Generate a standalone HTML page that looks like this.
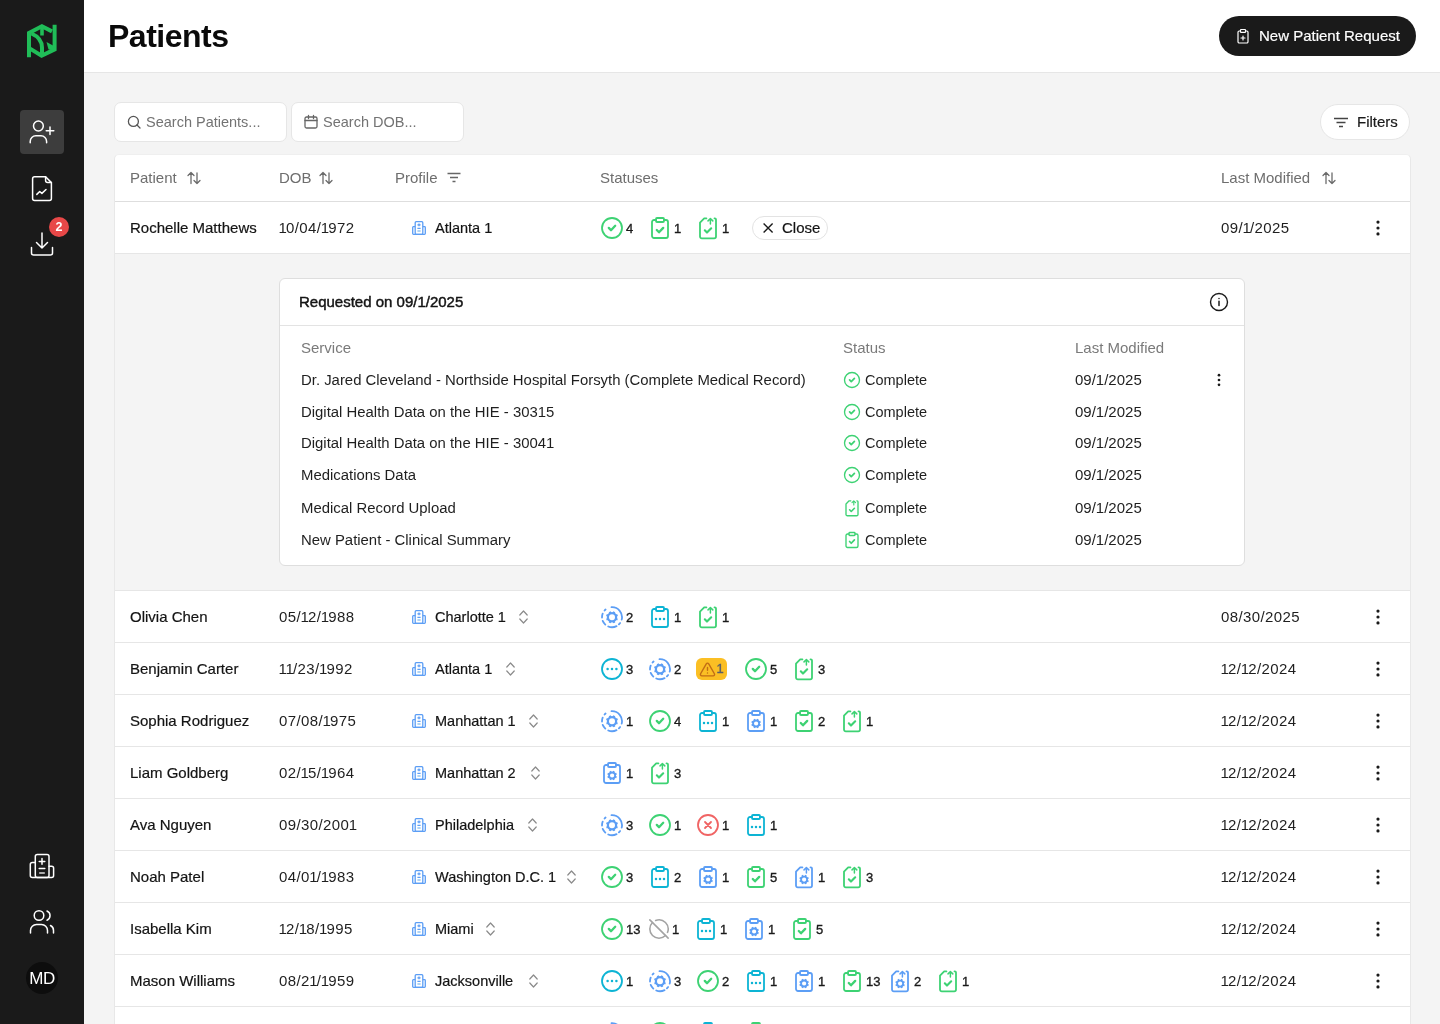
<!DOCTYPE html>
<html><head><meta charset="utf-8">
<style>
*{box-sizing:border-box;margin:0;padding:0}
html,body{will-change:transform;width:1440px;height:1024px;overflow:hidden;background:#f4f4f4;font-family:"Liberation Sans",sans-serif;color:#1a1a1a}
.abs{position:absolute}
svg.abs{overflow:visible}
#side{position:absolute;left:0;top:0;width:84px;height:1024px;background:#1a1a1a}
#hdr{position:absolute;left:84px;top:0;width:1356px;height:73px;background:#fff;border-bottom:1px solid #e6e6e6}
#title{position:absolute;left:24px;top:16px;font-size:32px;font-weight:bold;letter-spacing:-0.5px;color:#0a0a0a;line-height:40px}
#npr{position:absolute;left:1135px;top:16px;width:197px;height:40px;border-radius:20px;background:#1a1a1a;color:#fff;font-size:15px;line-height:40px;-webkit-text-stroke:0.2px #fff}
.inp{position:absolute;top:102px;height:40px;background:#fff;border:1px solid #e6e6e6;border-radius:7px;color:#737373;font-size:14.5px;line-height:38px}
#filters{position:absolute;left:1320px;top:104px;width:90px;height:36px;border-radius:18px;background:#fff;border:1px solid #e6e6e6;font-size:15px;line-height:34px;-webkit-text-stroke:0.2px #1a1a1a}
#tbl{position:absolute;left:114px;top:154px;width:1297px;height:900px;background:#fff;border:1px solid #e8e8e8;border-top-color:#efefef;border-radius:5px}
.cell{line-height:51px;font-size:15px;white-space:nowrap;color:#1f1f1f}
.med{color:#141414;-webkit-text-stroke:0.2px #141414}
.date{letter-spacing:0.4px}
.n1{letter-spacing:-0.9px;margin-left:-0.5px}
.th{position:absolute;top:154px;line-height:47px;font-size:15px;color:#6e6e6e;white-space:nowrap}
.hline{position:absolute;left:115px;width:1295px;height:1px;background:#e6e6e6}
.num{font-size:13px;font-weight:normal;-webkit-text-stroke:0.35px currentColor;line-height:51px;color:#1a1a1a}
#card{position:absolute;left:279px;top:278px;width:966px;height:288px;background:#fff;border:1px solid #dedede;border-radius:6px}
.sr{position:absolute;font-size:15px;line-height:20px;white-space:nowrap;color:#1f1f1f}
.sh{position:absolute;font-size:15px;line-height:20px;white-space:nowrap;color:#7a7a7a}
</style></head><body>
<svg width="0" height="0" style="position:absolute"><defs><symbol id="cc" viewBox="0 0 24 24"><g fill="none" stroke="#3dd273" stroke-width="1.8" stroke-linecap="round" stroke-linejoin="round"><circle cx="12" cy="12" r="10"/><path d="m8.8 11.9 2.2 2.3 4.2-4.4" stroke-width="2.3"/></g></symbol><symbol id="clc" viewBox="0 0 24 24"><g fill="none" stroke="#3dd273" stroke-width="1.8" stroke-linecap="round" stroke-linejoin="round"><path d="M16 4h2a2 2 0 0 1 2 2v14a2 2 0 0 1-2 2H6a2 2 0 0 1-2-2V6a2 2 0 0 1 2-2h2"/><rect x="8" y="2" width="8" height="4" rx="1"/><path d="m8.8 14 2.2 2.3 4.2-4.4" stroke-width="2.3"/></g></symbol><symbol id="cld" viewBox="0 0 24 24"><g fill="none" stroke="#0db4d4" stroke-width="1.8" stroke-linecap="round" stroke-linejoin="round"><path d="M16 4h2a2 2 0 0 1 2 2v14a2 2 0 0 1-2 2H6a2 2 0 0 1-2-2V6a2 2 0 0 1 2-2h2"/><rect x="8" y="2" width="8" height="4" rx="1"/><path d="M8 14h.01M12 14h.01M16 14h.01" stroke-width="2.5"/></g></symbol><symbol id="clg" viewBox="0 0 24 24"><g fill="none" stroke="#5c9ef5" stroke-width="1.8" stroke-linecap="round" stroke-linejoin="round"><path d="M16 4h2a2 2 0 0 1 2 2v14a2 2 0 0 1-2 2H6a2 2 0 0 1-2-2V6a2 2 0 0 1 2-2h2"/><rect x="8" y="2" width="8" height="4" rx="1"/></g><circle cx="12.1" cy="14.5" r="3.0" stroke="#5c9ef5" stroke-width="1.8" fill="none"/><line x1="13.25" y1="11.73" x2="13.94" y2="10.07" stroke="#5c9ef5" stroke-width="1.71"/><line x1="14.87" y1="13.35" x2="16.53" y2="12.66" stroke="#5c9ef5" stroke-width="1.71"/><line x1="14.87" y1="15.65" x2="16.53" y2="16.34" stroke="#5c9ef5" stroke-width="1.71"/><line x1="13.25" y1="17.27" x2="13.94" y2="18.93" stroke="#5c9ef5" stroke-width="1.71"/><line x1="10.95" y1="17.27" x2="10.26" y2="18.93" stroke="#5c9ef5" stroke-width="1.71"/><line x1="9.33" y1="15.65" x2="7.67" y2="16.34" stroke="#5c9ef5" stroke-width="1.71"/><line x1="9.33" y1="13.35" x2="7.67" y2="12.66" stroke="#5c9ef5" stroke-width="1.71"/><line x1="10.95" y1="11.73" x2="10.26" y2="10.07" stroke="#5c9ef5" stroke-width="1.71"/></symbol><symbol id="cuc" viewBox="0 0 24 24"><g fill="none" stroke="#3dd273" stroke-width="1.8" stroke-linecap="round" stroke-linejoin="round"><path d="M10.4 2.4H8.2L4 6.6V20.5a1.8 1.8 0 0 0 1.8 1.8h12.4a1.8 1.8 0 0 0 1.8-1.8V3.6a1.2 1.2 0 0 0-1.2-1.2h-0.3"/><path d="M14.4 8V2.5M12 4.9l2.4-2.4 2.4 2.4" stroke-width="1.5"/><path d="m8.8 14.3 2.2 2.3 4.2-4.3" stroke-width="2.1"/></g></symbol><symbol id="cug" viewBox="0 0 24 24"><g fill="none" stroke="#5c9ef5" stroke-width="1.8" stroke-linecap="round" stroke-linejoin="round"><path d="M10.4 2.4H8.2L4 6.6V20.5a1.8 1.8 0 0 0 1.8 1.8h12.4a1.8 1.8 0 0 0 1.8-1.8V3.6a1.2 1.2 0 0 0-1.2-1.2h-0.3"/><path d="M14.4 8V2.5M12 4.9l2.4-2.4 2.4 2.4" stroke-width="1.5"/></g><circle cx="12.1" cy="14.6" r="3.0" stroke="#5c9ef5" stroke-width="1.8" fill="none"/><line x1="13.25" y1="11.83" x2="13.94" y2="10.17" stroke="#5c9ef5" stroke-width="1.71"/><line x1="14.87" y1="13.45" x2="16.53" y2="12.76" stroke="#5c9ef5" stroke-width="1.71"/><line x1="14.87" y1="15.75" x2="16.53" y2="16.44" stroke="#5c9ef5" stroke-width="1.71"/><line x1="13.25" y1="17.37" x2="13.94" y2="19.03" stroke="#5c9ef5" stroke-width="1.71"/><line x1="10.95" y1="17.37" x2="10.26" y2="19.03" stroke="#5c9ef5" stroke-width="1.71"/><line x1="9.33" y1="15.75" x2="7.67" y2="16.44" stroke="#5c9ef5" stroke-width="1.71"/><line x1="9.33" y1="13.45" x2="7.67" y2="12.76" stroke="#5c9ef5" stroke-width="1.71"/><line x1="10.95" y1="11.83" x2="10.26" y2="10.17" stroke="#5c9ef5" stroke-width="1.71"/></symbol><symbol id="gd" viewBox="0 0 24 24"><g fill="none" stroke="#5c9ef5" stroke-width="1.8" stroke-linecap="round"><path d="M11.48 2.21A10 10 0 0 1 21.70 14.62 M20.09 18.08A10 10 0 0 1 18.95 19.39 M16.54 21.11A10 10 0 0 1 8.25 21.47 M5.31 19.63A10 10 0 0 1 2.73 15.95 M2.01 12.55A10 10 0 0 1 2.66 8.62 M4.57 5.51A10 10 0 0 1 5.57 4.54"/></g><circle cx="12" cy="12.3" r="4.1" stroke="#5c9ef5" stroke-width="2.2" fill="none"/><line x1="13.57" y1="8.51" x2="14.30" y2="6.76" stroke="#5c9ef5" stroke-width="2.09"/><line x1="15.79" y1="10.73" x2="17.54" y2="10.00" stroke="#5c9ef5" stroke-width="2.09"/><line x1="15.79" y1="13.87" x2="17.54" y2="14.60" stroke="#5c9ef5" stroke-width="2.09"/><line x1="13.57" y1="16.09" x2="14.30" y2="17.84" stroke="#5c9ef5" stroke-width="2.09"/><line x1="10.43" y1="16.09" x2="9.70" y2="17.84" stroke="#5c9ef5" stroke-width="2.09"/><line x1="8.21" y1="13.87" x2="6.46" y2="14.60" stroke="#5c9ef5" stroke-width="2.09"/><line x1="8.21" y1="10.73" x2="6.46" y2="10.00" stroke="#5c9ef5" stroke-width="2.09"/><line x1="10.43" y1="8.51" x2="9.70" y2="6.76" stroke="#5c9ef5" stroke-width="2.09"/></symbol><symbol id="cd" viewBox="0 0 24 24"><g fill="none" stroke="#0db4d4" stroke-width="1.8" stroke-linecap="round"><circle cx="12" cy="12" r="10"/><path d="M7.6 12h.01M12 12h.01M16.4 12h.01" stroke-width="2.5"/></g></symbol><symbol id="cx" viewBox="0 0 24 24"><g fill="none" stroke="#f06464" stroke-width="1.8" stroke-linecap="round"><circle cx="12" cy="12" r="10"/><path d="m15 9-6 6M9 9l6 6"/></g></symbol><symbol id="co" viewBox="0 0 24 24"><g fill="none" stroke="#a3a3a3" stroke-width="1.7" stroke-linecap="round"><path d="m2 2 20 20"/><path d="M8.35 2.69A10 10 0 0 1 21.3 15.65"/><path d="M19.08 19.08A10 10 0 1 1 4.92 4.92"/></g></symbol></defs></svg>
<div id="side">
  <!-- logo -->
  <svg class="abs" style="left:22px;top:20px" width="40" height="42" viewBox="0 0 40 42">
    <g fill="none" stroke="#20bd58" stroke-width="4" stroke-linejoin="miter">
      <path d="M7 37.3V13L19.9 6.2 30 11.4"/>
      <path d="M32.6 4.8V29.4L19.6 35.8 8 28.6"/>
      <path d="M9.5 13.5Q19.8 18 20 27.5V35"/>
      <path d="M20 6.5v9" stroke-width="3.6"/>
    </g>
    <polygon points="24.5,22 31,25.5 31,30 26.5,29.5" fill="#20bd58"/>
  </svg>
  <div class="abs" style="left:20px;top:110px;width:44px;height:44px;border-radius:4px;background:#3d3d3d"></div>
  <svg class="abs" style="left:20px;top:110px" width="44" height="44" viewBox="0 0 44 44"><g fill="none" stroke="#fff" stroke-width="1.5" stroke-linecap="round"><circle cx="18.4" cy="16" r="4.9"/><path d="M10.2 32.8v-1.4a5.6 5.6 0 0 1 5.6-5.6h5.2a5.6 5.6 0 0 1 5.6 5.6v1.4"/><path d="M30 17v7.6M26.2 20.8h7.6"/></g></svg>
  <svg class="abs" style="left:20px;top:166px" width="44" height="44" viewBox="0 0 44 44"><g fill="none" stroke="#fff" stroke-width="1.5" stroke-linejoin="round" stroke-linecap="round"><path d="M25.6 10.8H14.6a2 2 0 0 0-2 2v19.6a2 2 0 0 0 2 2h14.8a2 2 0 0 0 2-2V16.6z"/><path d="M25.6 10.8v3.8a2 2 0 0 0 2 2h3.8"/><path d="M16.8 28.4l2.9-2.9 2.2 1.9 4.1-3.9"/></g></svg>
  <svg class="abs" style="left:20px;top:222px" width="44" height="44" viewBox="0 0 44 44"><g fill="none" stroke="#fff" stroke-width="1.5" stroke-linecap="round" stroke-linejoin="round"><path d="M22 11v15M16.5 20.5 22 26l5.5-5.5"/><path d="M11.5 25.5v5.5a2 2 0 0 0 2 2h17a2 2 0 0 0 2-2v-5.5"/></g></svg>
  <div class="abs" style="left:49px;top:217px;width:20px;height:20px;border-radius:10px;background:#e84848;color:#fff;font-size:12.5px;font-weight:bold;line-height:20px;text-align:center">2</div>
  <svg class="abs" style="left:20px;top:844px" width="44" height="44" viewBox="0 0 44 44"><g fill="none" stroke="#fff" stroke-width="1.5" stroke-linecap="round" stroke-linejoin="round"><rect x="15.3" y="10.5" width="13.7" height="23.1" rx="2"/><path d="M15.3 18.4h-3a2 2 0 0 0-2 2v11.2a2 2 0 0 0 2 2h19.3a2 2 0 0 0 2-2V24.3a2 2 0 0 0-2-2H29"/><path d="M22 14.6v5.6M19.2 17.4h5.6M19.2 24.4h5.6"/><path d="M19.2 29h5.6" stroke="#b5b5b5" stroke-width="1.9" stroke-linecap="butt"/></g></svg>
  <svg class="abs" style="left:20px;top:900px" width="44" height="44" viewBox="0 0 44 44"><g fill="none" stroke="#fff" stroke-width="1.5" stroke-linecap="round"><circle cx="19" cy="15.5" r="4.8"/><path d="M10.5 33v-2.5a6 6 0 0 1 6-6h5a6 6 0 0 1 6 6V33"/><path d="M27 11a5 5 0 0 1 0 9.2M30.5 25.5a5.5 5.5 0 0 1 3 5V33"/></g></svg>
  <div class="abs" style="left:26px;top:962px;width:32px;height:32px;border-radius:16px;background:#0d0d0d;color:#fff;font-size:17px;line-height:34px;text-align:center;letter-spacing:-0.5px">MD</div>
</div>
<div id="hdr">
  <div id="title">Patients</div>
  <div id="npr"><span class="abs" style="left:40px;top:0">New Patient Request</span>
    <svg class="abs" style="left:16px;top:12px" width="16" height="16" viewBox="0 0 16 16"><g fill="none" stroke="#fff" stroke-width="1.2" stroke-linecap="round" stroke-linejoin="round"><path d="M10.5 3h1.3a1.2 1.2 0 0 1 1.2 1.2v9.6a1.2 1.2 0 0 1-1.2 1.2H4.2A1.2 1.2 0 0 1 3 13.8V4.2A1.2 1.2 0 0 1 4.2 3h1.3"/><rect x="5.5" y="1.5" width="5" height="2.8" rx="0.6"/><path d="M8 8v4M6 10h4"/></g></svg>
  </div>
</div>
<div class="inp" style="left:114px;width:173px"><span class="abs" style="left:31px;top:0">Search Patients...</span>
  <svg class="abs" style="left:11px;top:11px" width="16" height="16" viewBox="0 0 16 16"><g fill="none" stroke="#555" stroke-width="1.3" stroke-linecap="round"><circle cx="7.4" cy="7.4" r="5"/><path d="m11 11 3 3"/></g></svg>
</div>
<div class="inp" style="left:291px;width:173px"><span class="abs" style="left:31px;top:0">Search DOB...</span>
  <svg class="abs" style="left:11px;top:11px" width="16" height="16" viewBox="0 0 16 16"><g fill="none" stroke="#666" stroke-width="1.3" stroke-linecap="round"><rect x="2" y="3" width="12" height="11" rx="1.5"/><path d="M2 6.5h12M5.5 1.5v3M10.5 1.5v3"/></g></svg>
</div>
<div id="filters"><span class="abs" style="left:36px;top:0">Filters</span>
  <svg class="abs" style="left:12px;top:10px" width="16" height="16" viewBox="0 0 16 16"><g fill="none" stroke="#444" stroke-width="1.5" stroke-linecap="butt"><path d="M1 3.5h14M3.5 7.5h9M6 11.5h4"/></g></svg>
</div>
<div id="tbl"></div>
<div class="th" style="left:130px">Patient</div>
<svg class="abs" style="left:186px;top:170px" width="16" height="16" viewBox="0 0 16 16"><g fill="none" stroke="#6b6b6b" stroke-width="1.3" stroke-linecap="round" stroke-linejoin="round"><path d="M5 13.5V2.5M2 5.5l3-3 3 3M11 3v10.5M8 10.5l3 3 3-3"/></g></svg>
<div class="th" style="left:279px">DOB</div>
<svg class="abs" style="left:318px;top:170px" width="16" height="16" viewBox="0 0 16 16"><g fill="none" stroke="#6b6b6b" stroke-width="1.3" stroke-linecap="round" stroke-linejoin="round"><path d="M5 13.5V2.5M2 5.5l3-3 3 3M11 3v10.5M8 10.5l3 3 3-3"/></g></svg>
<div class="th" style="left:395px">Profile</div>
<svg class="abs" style="left:446px;top:170px" width="16" height="16" viewBox="0 0 16 16"><g fill="none" stroke="#666" stroke-width="1.3"><path d="M1.5 3.5h13M4 7.5h8M6.5 11.5h3"/></g></svg>
<div class="th" style="left:600px">Statuses</div>
<div class="th" style="left:1221px">Last Modified</div>
<svg class="abs" style="left:1321px;top:170px" width="16" height="16" viewBox="0 0 16 16"><g fill="none" stroke="#6b6b6b" stroke-width="1.3" stroke-linecap="round" stroke-linejoin="round"><path d="M5 13.5V2.5M2 5.5l3-3 3 3M11 3v10.5M8 10.5l3 3 3-3"/></g></svg>
<div class="hline" style="top:201px;background:#dedede"></div>
<div class="abs cell med" style="left:130px;top:202px">Rochelle Matthews</div>
<div class="abs cell date" style="left:279px;top:202px"><span class="n1">1</span>0/04/<span class="n1">1</span>972</div>
<svg class="abs" style="left:412px;top:221px" width="14" height="14" viewBox="0 0 14 14"><g fill="none" stroke="#5c9ef5" stroke-width="1.3" stroke-linejoin="round"><rect x="3.2" y="0.7" width="7.6" height="12.6" rx="1"/><path d="M3.2 5.7H1.4a0.8 0.8 0 0 0-0.7 0.8v6a0.8 0.8 0 0 0 0.8 0.8H12.5a0.8 0.8 0 0 0 0.8-0.8v-6a0.8 0.8 0 0 0-0.8-0.8H10.8"/><path d="M7 2.4v2.8M5.4 3.8h3.2M5.4 7.4h3.2"/><path d="M5.4 10h3.2" stroke="#93c5f0" stroke-width="1.5"/></g></svg><div class="abs cell med" style="left:435px;top:203px;font-size:14.5px">Atlanta 1</div>
<svg class="abs" style="left:600px;top:216.0px" width="24" height="24" viewBox="0 0 24 24"><use href="#cc"/></svg><div class="abs num" style="left:626px;top:203px">4</div><svg class="abs" style="left:648px;top:216.0px" width="24" height="24" viewBox="0 0 24 24"><use href="#clc"/></svg><div class="abs num" style="left:674px;top:203px">1</div><svg class="abs" style="left:696px;top:216.0px" width="24" height="24" viewBox="0 0 24 24"><use href="#cuc"/></svg><div class="abs num" style="left:722px;top:203px">1</div>
<div class="abs" style="left:752px;top:216px;width:76px;height:24px;border:1px solid #e3e3e3;border-radius:12px;background:#fff"></div>
<svg class="abs" style="left:761px;top:221px" width="14" height="14" viewBox="0 0 14 14"><path d="M2.6 2.6l9 9M11.6 2.6l-9 9" stroke="#1a1a1a" stroke-width="1.4" stroke-linecap="butt"/></svg>
<div class="abs cell med" style="left:782px;top:202px">Close</div>
<div class="abs cell date" style="left:1221px;top:202px">09/<span class="n1">1</span>/2025</div>
<svg class="abs" style="left:1366px;top:216px" width="24" height="24" viewBox="0 0 24 24"><g fill="#1a1a1a"><circle cx="12" cy="6.1" r="1.6"/><circle cx="12" cy="12" r="1.6"/><circle cx="12" cy="17.9" r="1.6"/></g></svg>
<div class="hline" style="top:253px"></div>
<div class="abs" style="left:115px;top:254px;width:1295px;height:336px;background:#f4f4f4"></div>
<div class="hline" style="top:590px"></div>
<div class="abs cell med" style="left:130px;top:591px">Olivia Chen</div>
<div class="abs cell date" style="left:279px;top:591px">05/<span class="n1">1</span>2/<span class="n1">1</span>988</div>
<svg class="abs" style="left:412px;top:610px" width="14" height="14" viewBox="0 0 14 14"><g fill="none" stroke="#5c9ef5" stroke-width="1.3" stroke-linejoin="round"><rect x="3.2" y="0.7" width="7.6" height="12.6" rx="1"/><path d="M3.2 5.7H1.4a0.8 0.8 0 0 0-0.7 0.8v6a0.8 0.8 0 0 0 0.8 0.8H12.5a0.8 0.8 0 0 0 0.8-0.8v-6a0.8 0.8 0 0 0-0.8-0.8H10.8"/><path d="M7 2.4v2.8M5.4 3.8h3.2M5.4 7.4h3.2"/><path d="M5.4 10h3.2" stroke="#93c5f0" stroke-width="1.5"/></g></svg><div class="abs cell med" style="left:435px;top:592px;font-size:14.5px">Charlotte 1</div><svg class="abs" style="left:519.0px;top:610px" width="9" height="14" viewBox="0 0 9 14"><g fill="none" stroke="#8a8a8a" stroke-width="1.2" stroke-linecap="round" stroke-linejoin="round"><path d="M0.8 5 4.5 1 8.2 5M0.8 9 4.5 13 8.2 9"/></g></svg>
<div class="abs cell date" style="left:1221px;top:591px">08/30/2025</div>
<svg class="abs" style="left:1366px;top:605px" width="24" height="24" viewBox="0 0 24 24"><g fill="#1a1a1a"><circle cx="12" cy="6.1" r="1.6"/><circle cx="12" cy="12" r="1.6"/><circle cx="12" cy="17.9" r="1.6"/></g></svg>
<div class="hline" style="top:642px"></div>
<svg class="abs" style="left:600px;top:605.0px" width="24" height="24" viewBox="0 0 24 24"><use href="#gd"/></svg><div class="abs num" style="left:626px;top:592px">2</div><svg class="abs" style="left:648px;top:605.0px" width="24" height="24" viewBox="0 0 24 24"><use href="#cld"/></svg><div class="abs num" style="left:674px;top:592px">1</div><svg class="abs" style="left:696px;top:605.0px" width="24" height="24" viewBox="0 0 24 24"><use href="#cuc"/></svg><div class="abs num" style="left:722px;top:592px">1</div>
<div class="abs cell med" style="left:130px;top:643px">Benjamin Carter</div>
<div class="abs cell date" style="left:279px;top:643px"><span class="n1">1</span><span class="n1">1</span>/23/<span class="n1">1</span>992</div>
<svg class="abs" style="left:412px;top:662px" width="14" height="14" viewBox="0 0 14 14"><g fill="none" stroke="#5c9ef5" stroke-width="1.3" stroke-linejoin="round"><rect x="3.2" y="0.7" width="7.6" height="12.6" rx="1"/><path d="M3.2 5.7H1.4a0.8 0.8 0 0 0-0.7 0.8v6a0.8 0.8 0 0 0 0.8 0.8H12.5a0.8 0.8 0 0 0 0.8-0.8v-6a0.8 0.8 0 0 0-0.8-0.8H10.8"/><path d="M7 2.4v2.8M5.4 3.8h3.2M5.4 7.4h3.2"/><path d="M5.4 10h3.2" stroke="#93c5f0" stroke-width="1.5"/></g></svg><div class="abs cell med" style="left:435px;top:644px;font-size:14.5px">Atlanta 1</div><svg class="abs" style="left:505.5px;top:662px" width="9" height="14" viewBox="0 0 9 14"><g fill="none" stroke="#8a8a8a" stroke-width="1.2" stroke-linecap="round" stroke-linejoin="round"><path d="M0.8 5 4.5 1 8.2 5M0.8 9 4.5 13 8.2 9"/></g></svg>
<div class="abs cell date" style="left:1221px;top:643px"><span class="n1">1</span>2/<span class="n1">1</span>2/2024</div>
<svg class="abs" style="left:1366px;top:657px" width="24" height="24" viewBox="0 0 24 24"><g fill="#1a1a1a"><circle cx="12" cy="6.1" r="1.6"/><circle cx="12" cy="12" r="1.6"/><circle cx="12" cy="17.9" r="1.6"/></g></svg>
<div class="hline" style="top:694px"></div>
<svg class="abs" style="left:600px;top:657.0px" width="24" height="24" viewBox="0 0 24 24"><use href="#cd"/></svg><div class="abs num" style="left:626px;top:644px">3</div><svg class="abs" style="left:648px;top:657.0px" width="24" height="24" viewBox="0 0 24 24"><use href="#gd"/></svg><div class="abs num" style="left:674px;top:644px">2</div><div class="abs" style="left:696px;top:658px;width:31px;height:22px;background:#fbbf24;border-radius:6px"></div><svg class="abs" style="left:698.5px;top:660.5px" width="17" height="17" viewBox="0 0 24 24"><g fill="none" stroke="#c26d15" stroke-width="2" stroke-linecap="round" stroke-linejoin="round"><path d="m21.73 18-8-14a2 2 0 0 0-3.48 0l-8 14A2 2 0 0 0 4 21h16a2 2 0 0 0 1.73-3"/><path d="M12 9v4M12 17h.01"/></g></svg><div class="abs num" style="left:716.5px;top:643px;color:#5d5f66">1</div><svg class="abs" style="left:744px;top:657.0px" width="24" height="24" viewBox="0 0 24 24"><use href="#cc"/></svg><div class="abs num" style="left:770px;top:644px">5</div><svg class="abs" style="left:792px;top:657.0px" width="24" height="24" viewBox="0 0 24 24"><use href="#cuc"/></svg><div class="abs num" style="left:818px;top:644px">3</div>
<div class="abs cell med" style="left:130px;top:695px">Sophia Rodriguez</div>
<div class="abs cell date" style="left:279px;top:695px">07/08/<span class="n1">1</span>975</div>
<svg class="abs" style="left:412px;top:714px" width="14" height="14" viewBox="0 0 14 14"><g fill="none" stroke="#5c9ef5" stroke-width="1.3" stroke-linejoin="round"><rect x="3.2" y="0.7" width="7.6" height="12.6" rx="1"/><path d="M3.2 5.7H1.4a0.8 0.8 0 0 0-0.7 0.8v6a0.8 0.8 0 0 0 0.8 0.8H12.5a0.8 0.8 0 0 0 0.8-0.8v-6a0.8 0.8 0 0 0-0.8-0.8H10.8"/><path d="M7 2.4v2.8M5.4 3.8h3.2M5.4 7.4h3.2"/><path d="M5.4 10h3.2" stroke="#93c5f0" stroke-width="1.5"/></g></svg><div class="abs cell med" style="left:435px;top:696px;font-size:14.5px">Manhattan 1</div><svg class="abs" style="left:529.0px;top:714px" width="9" height="14" viewBox="0 0 9 14"><g fill="none" stroke="#8a8a8a" stroke-width="1.2" stroke-linecap="round" stroke-linejoin="round"><path d="M0.8 5 4.5 1 8.2 5M0.8 9 4.5 13 8.2 9"/></g></svg>
<div class="abs cell date" style="left:1221px;top:695px"><span class="n1">1</span>2/<span class="n1">1</span>2/2024</div>
<svg class="abs" style="left:1366px;top:709px" width="24" height="24" viewBox="0 0 24 24"><g fill="#1a1a1a"><circle cx="12" cy="6.1" r="1.6"/><circle cx="12" cy="12" r="1.6"/><circle cx="12" cy="17.9" r="1.6"/></g></svg>
<div class="hline" style="top:746px"></div>
<svg class="abs" style="left:600px;top:709.0px" width="24" height="24" viewBox="0 0 24 24"><use href="#gd"/></svg><div class="abs num" style="left:626px;top:696px">1</div><svg class="abs" style="left:648px;top:709.0px" width="24" height="24" viewBox="0 0 24 24"><use href="#cc"/></svg><div class="abs num" style="left:674px;top:696px">4</div><svg class="abs" style="left:696px;top:709.0px" width="24" height="24" viewBox="0 0 24 24"><use href="#cld"/></svg><div class="abs num" style="left:722px;top:696px">1</div><svg class="abs" style="left:744px;top:709.0px" width="24" height="24" viewBox="0 0 24 24"><use href="#clg"/></svg><div class="abs num" style="left:770px;top:696px">1</div><svg class="abs" style="left:792px;top:709.0px" width="24" height="24" viewBox="0 0 24 24"><use href="#clc"/></svg><div class="abs num" style="left:818px;top:696px">2</div><svg class="abs" style="left:840px;top:709.0px" width="24" height="24" viewBox="0 0 24 24"><use href="#cuc"/></svg><div class="abs num" style="left:866px;top:696px">1</div>
<div class="abs cell med" style="left:130px;top:747px">Liam Goldberg</div>
<div class="abs cell date" style="left:279px;top:747px">02/<span class="n1">1</span>5/<span class="n1">1</span>964</div>
<svg class="abs" style="left:412px;top:766px" width="14" height="14" viewBox="0 0 14 14"><g fill="none" stroke="#5c9ef5" stroke-width="1.3" stroke-linejoin="round"><rect x="3.2" y="0.7" width="7.6" height="12.6" rx="1"/><path d="M3.2 5.7H1.4a0.8 0.8 0 0 0-0.7 0.8v6a0.8 0.8 0 0 0 0.8 0.8H12.5a0.8 0.8 0 0 0 0.8-0.8v-6a0.8 0.8 0 0 0-0.8-0.8H10.8"/><path d="M7 2.4v2.8M5.4 3.8h3.2M5.4 7.4h3.2"/><path d="M5.4 10h3.2" stroke="#93c5f0" stroke-width="1.5"/></g></svg><div class="abs cell med" style="left:435px;top:748px;font-size:14.5px">Manhattan 2</div><svg class="abs" style="left:531.0px;top:766px" width="9" height="14" viewBox="0 0 9 14"><g fill="none" stroke="#8a8a8a" stroke-width="1.2" stroke-linecap="round" stroke-linejoin="round"><path d="M0.8 5 4.5 1 8.2 5M0.8 9 4.5 13 8.2 9"/></g></svg>
<div class="abs cell date" style="left:1221px;top:747px"><span class="n1">1</span>2/<span class="n1">1</span>2/2024</div>
<svg class="abs" style="left:1366px;top:761px" width="24" height="24" viewBox="0 0 24 24"><g fill="#1a1a1a"><circle cx="12" cy="6.1" r="1.6"/><circle cx="12" cy="12" r="1.6"/><circle cx="12" cy="17.9" r="1.6"/></g></svg>
<div class="hline" style="top:798px"></div>
<svg class="abs" style="left:600px;top:761.0px" width="24" height="24" viewBox="0 0 24 24"><use href="#clg"/></svg><div class="abs num" style="left:626px;top:748px">1</div><svg class="abs" style="left:648px;top:761.0px" width="24" height="24" viewBox="0 0 24 24"><use href="#cuc"/></svg><div class="abs num" style="left:674px;top:748px">3</div>
<div class="abs cell med" style="left:130px;top:799px">Ava Nguyen</div>
<div class="abs cell date" style="left:279px;top:799px">09/30/200<span class="n1">1</span></div>
<svg class="abs" style="left:412px;top:818px" width="14" height="14" viewBox="0 0 14 14"><g fill="none" stroke="#5c9ef5" stroke-width="1.3" stroke-linejoin="round"><rect x="3.2" y="0.7" width="7.6" height="12.6" rx="1"/><path d="M3.2 5.7H1.4a0.8 0.8 0 0 0-0.7 0.8v6a0.8 0.8 0 0 0 0.8 0.8H12.5a0.8 0.8 0 0 0 0.8-0.8v-6a0.8 0.8 0 0 0-0.8-0.8H10.8"/><path d="M7 2.4v2.8M5.4 3.8h3.2M5.4 7.4h3.2"/><path d="M5.4 10h3.2" stroke="#93c5f0" stroke-width="1.5"/></g></svg><div class="abs cell med" style="left:435px;top:800px;font-size:14.5px">Philadelphia</div><svg class="abs" style="left:528.0px;top:818px" width="9" height="14" viewBox="0 0 9 14"><g fill="none" stroke="#8a8a8a" stroke-width="1.2" stroke-linecap="round" stroke-linejoin="round"><path d="M0.8 5 4.5 1 8.2 5M0.8 9 4.5 13 8.2 9"/></g></svg>
<div class="abs cell date" style="left:1221px;top:799px"><span class="n1">1</span>2/<span class="n1">1</span>2/2024</div>
<svg class="abs" style="left:1366px;top:813px" width="24" height="24" viewBox="0 0 24 24"><g fill="#1a1a1a"><circle cx="12" cy="6.1" r="1.6"/><circle cx="12" cy="12" r="1.6"/><circle cx="12" cy="17.9" r="1.6"/></g></svg>
<div class="hline" style="top:850px"></div>
<svg class="abs" style="left:600px;top:813.0px" width="24" height="24" viewBox="0 0 24 24"><use href="#gd"/></svg><div class="abs num" style="left:626px;top:800px">3</div><svg class="abs" style="left:648px;top:813.0px" width="24" height="24" viewBox="0 0 24 24"><use href="#cc"/></svg><div class="abs num" style="left:674px;top:800px">1</div><svg class="abs" style="left:696px;top:813.0px" width="24" height="24" viewBox="0 0 24 24"><use href="#cx"/></svg><div class="abs num" style="left:722px;top:800px">1</div><svg class="abs" style="left:744px;top:813.0px" width="24" height="24" viewBox="0 0 24 24"><use href="#cld"/></svg><div class="abs num" style="left:770px;top:800px">1</div>
<div class="abs cell med" style="left:130px;top:851px">Noah Patel</div>
<div class="abs cell date" style="left:279px;top:851px">04/0<span class="n1">1</span>/<span class="n1">1</span>983</div>
<svg class="abs" style="left:412px;top:870px" width="14" height="14" viewBox="0 0 14 14"><g fill="none" stroke="#5c9ef5" stroke-width="1.3" stroke-linejoin="round"><rect x="3.2" y="0.7" width="7.6" height="12.6" rx="1"/><path d="M3.2 5.7H1.4a0.8 0.8 0 0 0-0.7 0.8v6a0.8 0.8 0 0 0 0.8 0.8H12.5a0.8 0.8 0 0 0 0.8-0.8v-6a0.8 0.8 0 0 0-0.8-0.8H10.8"/><path d="M7 2.4v2.8M5.4 3.8h3.2M5.4 7.4h3.2"/><path d="M5.4 10h3.2" stroke="#93c5f0" stroke-width="1.5"/></g></svg><div class="abs cell med" style="left:435px;top:852px;font-size:14.5px">Washington D.C. 1</div><svg class="abs" style="left:566.5px;top:870px" width="9" height="14" viewBox="0 0 9 14"><g fill="none" stroke="#8a8a8a" stroke-width="1.2" stroke-linecap="round" stroke-linejoin="round"><path d="M0.8 5 4.5 1 8.2 5M0.8 9 4.5 13 8.2 9"/></g></svg>
<div class="abs cell date" style="left:1221px;top:851px"><span class="n1">1</span>2/<span class="n1">1</span>2/2024</div>
<svg class="abs" style="left:1366px;top:865px" width="24" height="24" viewBox="0 0 24 24"><g fill="#1a1a1a"><circle cx="12" cy="6.1" r="1.6"/><circle cx="12" cy="12" r="1.6"/><circle cx="12" cy="17.9" r="1.6"/></g></svg>
<div class="hline" style="top:902px"></div>
<svg class="abs" style="left:600px;top:865.0px" width="24" height="24" viewBox="0 0 24 24"><use href="#cc"/></svg><div class="abs num" style="left:626px;top:852px">3</div><svg class="abs" style="left:648px;top:865.0px" width="24" height="24" viewBox="0 0 24 24"><use href="#cld"/></svg><div class="abs num" style="left:674px;top:852px">2</div><svg class="abs" style="left:696px;top:865.0px" width="24" height="24" viewBox="0 0 24 24"><use href="#clg"/></svg><div class="abs num" style="left:722px;top:852px">1</div><svg class="abs" style="left:744px;top:865.0px" width="24" height="24" viewBox="0 0 24 24"><use href="#clc"/></svg><div class="abs num" style="left:770px;top:852px">5</div><svg class="abs" style="left:792px;top:865.0px" width="24" height="24" viewBox="0 0 24 24"><use href="#cug"/></svg><div class="abs num" style="left:818px;top:852px">1</div><svg class="abs" style="left:840px;top:865.0px" width="24" height="24" viewBox="0 0 24 24"><use href="#cuc"/></svg><div class="abs num" style="left:866px;top:852px">3</div>
<div class="abs cell med" style="left:130px;top:903px">Isabella Kim</div>
<div class="abs cell date" style="left:279px;top:903px"><span class="n1">1</span>2/<span class="n1">1</span>8/<span class="n1">1</span>995</div>
<svg class="abs" style="left:412px;top:922px" width="14" height="14" viewBox="0 0 14 14"><g fill="none" stroke="#5c9ef5" stroke-width="1.3" stroke-linejoin="round"><rect x="3.2" y="0.7" width="7.6" height="12.6" rx="1"/><path d="M3.2 5.7H1.4a0.8 0.8 0 0 0-0.7 0.8v6a0.8 0.8 0 0 0 0.8 0.8H12.5a0.8 0.8 0 0 0 0.8-0.8v-6a0.8 0.8 0 0 0-0.8-0.8H10.8"/><path d="M7 2.4v2.8M5.4 3.8h3.2M5.4 7.4h3.2"/><path d="M5.4 10h3.2" stroke="#93c5f0" stroke-width="1.5"/></g></svg><div class="abs cell med" style="left:435px;top:904px;font-size:14.5px">Miami</div><svg class="abs" style="left:485.5px;top:922px" width="9" height="14" viewBox="0 0 9 14"><g fill="none" stroke="#8a8a8a" stroke-width="1.2" stroke-linecap="round" stroke-linejoin="round"><path d="M0.8 5 4.5 1 8.2 5M0.8 9 4.5 13 8.2 9"/></g></svg>
<div class="abs cell date" style="left:1221px;top:903px"><span class="n1">1</span>2/<span class="n1">1</span>2/2024</div>
<svg class="abs" style="left:1366px;top:917px" width="24" height="24" viewBox="0 0 24 24"><g fill="#1a1a1a"><circle cx="12" cy="6.1" r="1.6"/><circle cx="12" cy="12" r="1.6"/><circle cx="12" cy="17.9" r="1.6"/></g></svg>
<div class="hline" style="top:954px"></div>
<svg class="abs" style="left:600px;top:917.0px" width="24" height="24" viewBox="0 0 24 24"><use href="#cc"/></svg><div class="abs num" style="left:626px;top:904px">13</div><svg class="abs" style="left:648px;top:918.0px" width="22" height="22" viewBox="0 0 24 24"><use href="#co"/></svg><div class="abs num" style="left:672px;top:904px">1</div><svg class="abs" style="left:694px;top:917.0px" width="24" height="24" viewBox="0 0 24 24"><use href="#cld"/></svg><div class="abs num" style="left:720px;top:904px">1</div><svg class="abs" style="left:742px;top:917.0px" width="24" height="24" viewBox="0 0 24 24"><use href="#clg"/></svg><div class="abs num" style="left:768px;top:904px">1</div><svg class="abs" style="left:790px;top:917.0px" width="24" height="24" viewBox="0 0 24 24"><use href="#clc"/></svg><div class="abs num" style="left:816px;top:904px">5</div>
<div class="abs cell med" style="left:130px;top:955px">Mason Williams</div>
<div class="abs cell date" style="left:279px;top:955px">08/2<span class="n1">1</span>/<span class="n1">1</span>959</div>
<svg class="abs" style="left:412px;top:974px" width="14" height="14" viewBox="0 0 14 14"><g fill="none" stroke="#5c9ef5" stroke-width="1.3" stroke-linejoin="round"><rect x="3.2" y="0.7" width="7.6" height="12.6" rx="1"/><path d="M3.2 5.7H1.4a0.8 0.8 0 0 0-0.7 0.8v6a0.8 0.8 0 0 0 0.8 0.8H12.5a0.8 0.8 0 0 0 0.8-0.8v-6a0.8 0.8 0 0 0-0.8-0.8H10.8"/><path d="M7 2.4v2.8M5.4 3.8h3.2M5.4 7.4h3.2"/><path d="M5.4 10h3.2" stroke="#93c5f0" stroke-width="1.5"/></g></svg><div class="abs cell med" style="left:435px;top:956px;font-size:14.5px">Jacksonville</div><svg class="abs" style="left:529.0px;top:974px" width="9" height="14" viewBox="0 0 9 14"><g fill="none" stroke="#8a8a8a" stroke-width="1.2" stroke-linecap="round" stroke-linejoin="round"><path d="M0.8 5 4.5 1 8.2 5M0.8 9 4.5 13 8.2 9"/></g></svg>
<div class="abs cell date" style="left:1221px;top:955px"><span class="n1">1</span>2/<span class="n1">1</span>2/2024</div>
<svg class="abs" style="left:1366px;top:969px" width="24" height="24" viewBox="0 0 24 24"><g fill="#1a1a1a"><circle cx="12" cy="6.1" r="1.6"/><circle cx="12" cy="12" r="1.6"/><circle cx="12" cy="17.9" r="1.6"/></g></svg>
<div class="hline" style="top:1006px"></div>
<svg class="abs" style="left:600px;top:969.0px" width="24" height="24" viewBox="0 0 24 24"><use href="#cd"/></svg><div class="abs num" style="left:626px;top:956px">1</div><svg class="abs" style="left:648px;top:969.0px" width="24" height="24" viewBox="0 0 24 24"><use href="#gd"/></svg><div class="abs num" style="left:674px;top:956px">3</div><svg class="abs" style="left:696px;top:969.0px" width="24" height="24" viewBox="0 0 24 24"><use href="#cc"/></svg><div class="abs num" style="left:722px;top:956px">2</div><svg class="abs" style="left:744px;top:969.0px" width="24" height="24" viewBox="0 0 24 24"><use href="#cld"/></svg><div class="abs num" style="left:770px;top:956px">1</div><svg class="abs" style="left:792px;top:969.0px" width="24" height="24" viewBox="0 0 24 24"><use href="#clg"/></svg><div class="abs num" style="left:818px;top:956px">1</div><svg class="abs" style="left:840px;top:969.0px" width="24" height="24" viewBox="0 0 24 24"><use href="#clc"/></svg><div class="abs num" style="left:866px;top:956px">13</div><svg class="abs" style="left:888px;top:969.0px" width="24" height="24" viewBox="0 0 24 24"><use href="#cug"/></svg><div class="abs num" style="left:914px;top:956px">2</div><svg class="abs" style="left:936px;top:969.0px" width="24" height="24" viewBox="0 0 24 24"><use href="#cuc"/></svg><div class="abs num" style="left:962px;top:956px">1</div>
<svg class="abs" style="left:600px;top:1021.0px" width="24" height="24" viewBox="0 0 24 24"><use href="#gd"/></svg><svg class="abs" style="left:648px;top:1021.0px" width="24" height="24" viewBox="0 0 24 24"><use href="#cc"/></svg><svg class="abs" style="left:696px;top:1021.0px" width="24" height="24" viewBox="0 0 24 24"><use href="#cld"/></svg><svg class="abs" style="left:744px;top:1021.0px" width="24" height="24" viewBox="0 0 24 24"><use href="#clc"/></svg>
<div id="card">
  <div class="abs" style="left:19px;top:13px;font-size:15px;font-weight:normal;-webkit-text-stroke:0.45px #141414;line-height:20px;color:#141414">Requested on 09/1/2025</div>
  <svg class="abs" style="left:928px;top:12px" width="22" height="22" viewBox="0 0 22 22"><g fill="none" stroke="#1a1a1a" stroke-width="1.4" stroke-linecap="round"><circle cx="11" cy="11" r="8.5"/><path d="M11 10.2v4.2M11 7.6h.01" stroke-width="1.5"/></g></svg>
  <div class="abs" style="left:0;top:46px;width:964px;height:1px;background:#e3e3e3"></div>
  <div class="sh" style="left:21px;top:59px">Service</div>
  <div class="sh" style="left:563px;top:59px">Status</div>
  <div class="sh" style="left:795px;top:59px">Last Modified</div>
  <div class="sr" style="left:21px;top:91px;font-size:14.9px">Dr. Jared Cleveland - Northside Hospital Forsyth (Complete Medical Record)</div>
<svg class="abs" style="left:563px;top:92px" width="18" height="18" viewBox="0 0 24 24"><use href="#cc"/></svg>
<div class="sr" style="left:585px;top:91px;font-size:14.5px">Complete</div>
<div class="sr" style="left:795px;top:91px">09/1/2025</div>
<div class="sr" style="left:21px;top:123px;font-size:14.9px">Digital Health Data on the HIE - 30315</div>
<svg class="abs" style="left:563px;top:124px" width="18" height="18" viewBox="0 0 24 24"><use href="#cc"/></svg>
<div class="sr" style="left:585px;top:123px;font-size:14.5px">Complete</div>
<div class="sr" style="left:795px;top:123px">09/1/2025</div>
<div class="sr" style="left:21px;top:154px;font-size:14.9px">Digital Health Data on the HIE - 30041</div>
<svg class="abs" style="left:563px;top:155px" width="18" height="18" viewBox="0 0 24 24"><use href="#cc"/></svg>
<div class="sr" style="left:585px;top:154px;font-size:14.5px">Complete</div>
<div class="sr" style="left:795px;top:154px">09/1/2025</div>
<div class="sr" style="left:21px;top:186px;font-size:14.9px">Medications Data</div>
<svg class="abs" style="left:563px;top:187px" width="18" height="18" viewBox="0 0 24 24"><use href="#cc"/></svg>
<div class="sr" style="left:585px;top:186px;font-size:14.5px">Complete</div>
<div class="sr" style="left:795px;top:186px">09/1/2025</div>
<div class="sr" style="left:21px;top:219px;font-size:14.9px">Medical Record Upload</div>
<svg class="abs" style="left:563px;top:220px" width="18" height="18" viewBox="0 0 24 24"><use href="#cuc"/></svg>
<div class="sr" style="left:585px;top:219px;font-size:14.5px">Complete</div>
<div class="sr" style="left:795px;top:219px">09/1/2025</div>
<div class="sr" style="left:21px;top:251px;font-size:14.9px">New Patient - Clinical Summary</div>
<svg class="abs" style="left:563px;top:252px" width="18" height="18" viewBox="0 0 24 24"><use href="#clc"/></svg>
<div class="sr" style="left:585px;top:251px;font-size:14.5px">Complete</div>
<div class="sr" style="left:795px;top:251px">09/1/2025</div>
<svg class="abs" style="left:927px;top:89px" width="24" height="24" viewBox="0 0 24 24"><g fill="#1a1a1a"><circle cx="12" cy="7.2" r="1.35"/><circle cx="12" cy="12" r="1.35"/><circle cx="12" cy="16.8" r="1.35"/></g></svg>
</div>
</body></html>
